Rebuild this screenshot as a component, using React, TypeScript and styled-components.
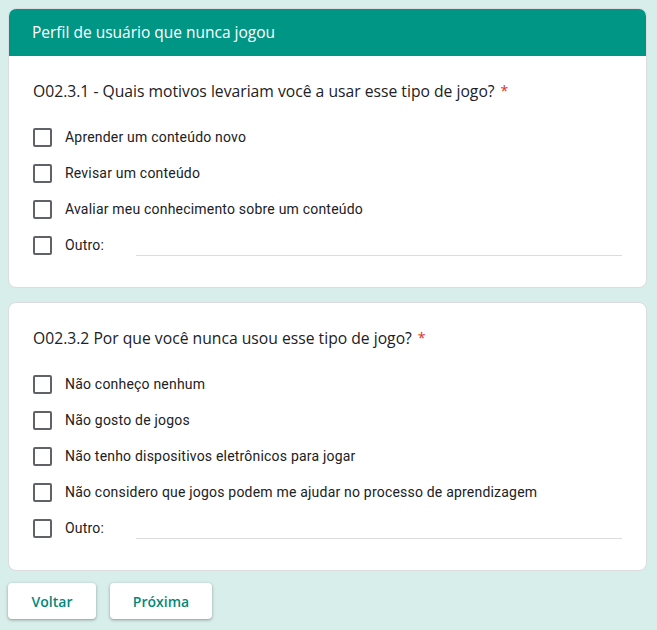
import React from "react";
import styled, { createGlobalStyle } from "styled-components";

const Global = createGlobalStyle`
  html, body { margin: 0; padding: 0; background: #d8eeeb; }
  body { padding: 8px; font-family: Roboto, "Liberation Sans", sans-serif; color: #202124; }
  * { box-sizing: border-box; }
`;

const Page = styled.div`
  width: 639px;
  display: flex;
  flex-direction: column;
`;

const Card = styled.div<{ $mt?: number }>`
  background: #fff;
  border-radius: 8px;
  border: 1px solid #dadce0;
  overflow: hidden;
  margin-top: ${(p) => p.$mt ?? 0}px;
`;

const Header = styled.div`
  background: #009686;
  height: 48px;
  margin: -1px -1px 0;
  display: flex;
  align-items: center;
  padding-left: 24px;
  color: #fff;
  font-family: "Open Sans", Roboto, sans-serif;
  font-size: 15.5px;
  font-weight: 500;
`;

const Body = styled.div`
  padding: 23px 24px 24px;
`;

const Title = styled.div`
  font-family: "Open Sans", Roboto, sans-serif;
  font-size: 15.7px;
  line-height: 24px;
  color: #202124;
  margin-bottom: 16px;
`;

const Star = styled.span`
  color: #d93025;
  font-size: 14px;
  margin-left: 6px;
  vertical-align: top;
`;

const List = styled.div`
  display: flex;
  flex-direction: column;
`;

const Item = styled.div`
  height: 36px;
  display: flex;
  align-items: center;
  font-size: 14px;
  letter-spacing: 0.2px;
  color: #202124;
`;

const Box = styled.span`
  width: 19px;
  height: 19px;
  border: 2px solid #5f6368;
  border-radius: 2px;
  margin-right: 13px;
  flex-shrink: 0;
`;

const OtherLabel = styled.span`
  width: 71px;
`;

const Line = styled.div`
  flex: 1;
  align-self: flex-end;
  margin-bottom: 7px;
  height: 1px;
  background: #dadce0;
`;

const Buttons = styled.div`
  display: flex;
  gap: 14px;
  margin-top: 12px;
`;

const Button = styled.button<{ $w: number }>`
  width: ${(p) => p.$w}px;
  height: 36px;
  border: none;
  border-radius: 4px;
  background: #fff;
  box-shadow: 0 1px 2px rgba(60, 64, 67, 0.3), 0 1px 3px 1px rgba(60, 64, 67, 0.15);
  color: #00897b;
  font-family: "Open Sans", Roboto, sans-serif;
  font-size: 14px;
  font-weight: 600;
  padding: 0;
`;

const Option = ({ label }: { label: string }) => (
  <Item>
    <Box />
    {label}
  </Item>
);

const Other = () => (
  <Item>
    <Box />
    <OtherLabel>Outro:</OtherLabel>
    <Line />
  </Item>
);

export default function App() {
  return (
    <>
      <Global />
      <Page>
        <Card>
          <Header>Perfil de usuário que nunca jogou</Header>
          <Body>
            <Title>
              O02.3.1 - Quais motivos levariam você a usar esse tipo de jogo?<Star>*</Star>
            </Title>
            <List>
              <Option label="Aprender um conteúdo novo" />
              <Option label="Revisar um conteúdo" />
              <Option label="Avaliar meu conhecimento sobre um conteúdo" />
              <Other />
            </List>
          </Body>
        </Card>
        <Card $mt={14}>
          <Body>
            <Title>
              O02.3.2 Por que você nunca usou esse tipo de jogo?<Star>*</Star>
            </Title>
            <List>
              <Option label="Não conheço nenhum" />
              <Option label="Não gosto de jogos" />
              <Option label="Não tenho dispositivos eletrônicos para jogar" />
              <Option label="Não considero que jogos podem me ajudar no processo de aprendizagem" />
              <Other />
            </List>
          </Body>
        </Card>
        <Buttons>
          <Button $w={88}>Voltar</Button>
          <Button $w={102}>Próxima</Button>
        </Buttons>
      </Page>
    </>
  );
}
